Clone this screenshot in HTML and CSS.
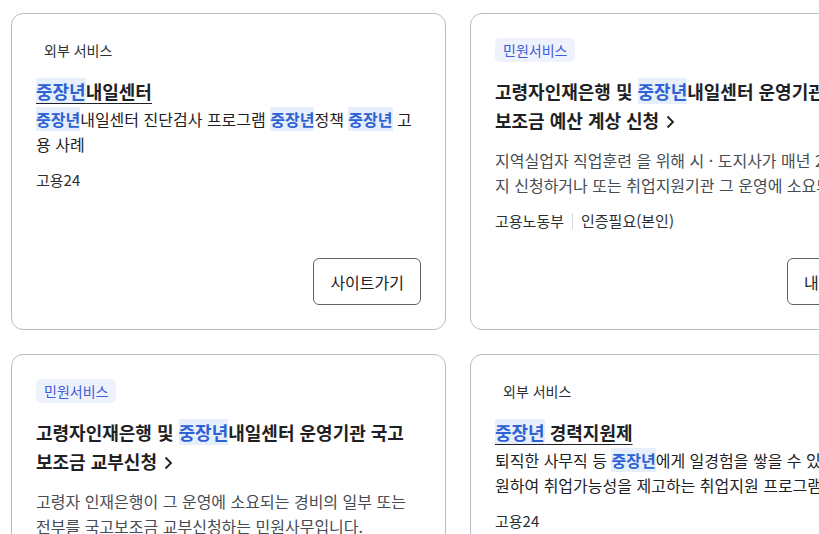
FILE: index.html
```html
<!DOCTYPE html>
<html lang="ko">
<head>
<meta charset="utf-8">
<title>검색 결과</title>
<link rel="stylesheet" href="styles.css">
</head>
<body>
<div class="grid">
  <article class="card">
    <span class="tag tag-ext">외부 서비스</span>
    <a class="title title-ext"><mark class="hl">중장년</mark>내일센터</a>
    <p class="desc desc-ext"><mark class="hl">중장년</mark>내일센터 진단검사 프로그램 <mark class="hl">중장년</mark>정책 <mark class="hl">중장년</mark> 고용 사례</p>
    <div class="meta meta-ext"><span>고용24</span></div>
    <button class="btn">사이트가기</button>
  </article>

  <article class="card">
    <span class="tag tag-civil">민원서비스</span>
    <a class="title">고령자인재은행 및 <mark class="hl hl-title">중장년</mark>내일센터 운영기관 국고 보조금 예산 계상 신청<svg class="chev" width="9" height="14" viewBox="0 0 9 14" aria-hidden="true"><path d="M1.5 1.5 L7 7 L1.5 12.5" fill="none" stroke="#1e2124" stroke-width="1.8"/></svg></a>
    <p class="desc">지역실업자 직업훈련 을 위해 시 · 도지사가 매년 2월 말까지 신청하거나 또는 취업지원기관 그 운영에 소요되는 경비</p>
    <div class="meta"><span>고용노동부</span><span class="sep"></span><span>인증필요(본인)</span></div>
    <button class="btn">내용보기</button>
  </article>

  <article class="card">
    <span class="tag tag-civil">민원서비스</span>
    <a class="title">고령자인재은행 및 <mark class="hl hl-title">중장년</mark>내일센터 운영기관 국고 보조금 교부신청<svg class="chev" width="9" height="14" viewBox="0 0 9 14" aria-hidden="true"><path d="M1.5 1.5 L7 7 L1.5 12.5" fill="none" stroke="#1e2124" stroke-width="1.8"/></svg></a>
    <p class="desc">고령자 인재은행이 그 운영에 소요되는 경비의 일부 또는 전부를 국고보조금 교부신청하는 민원사무입니다.</p>
    <div class="meta"><span>고용노동부</span><span class="sep"></span><span>인증필요(본인)</span></div>
    <button class="btn">내용보기</button>
  </article>

  <article class="card">
    <span class="tag tag-ext">외부 서비스</span>
    <a class="title title-ext"><mark class="hl">중장년</mark> 경력지원제</a>
    <p class="desc desc-ext">퇴직한 사무직 등 <mark class="hl">중장년</mark>에게 일경험을 쌓을 수 있도록 지원하여 취업가능성을 제고하는 취업지원 프로그램입니다.</p>
    <div class="meta meta-ext"><span>고용24</span></div>
    <button class="btn">사이트가기</button>
  </article>
</div>
</body>
</html>
```

FILE: styles.css
```css
html, body {
  margin: 0;
  padding: 0;
  overflow: hidden;
  background: #ffffff;
}

body {
  font-family: "Noto Sans CJK KR", "Noto Sans", sans-serif;
  color: #1e2124;
}

.grid {
  display: grid;
  grid-template-columns: 435px 435px;
  gap: 24px;
  padding: 13px 0 0 11px;
  width: max-content;
}

.card {
  box-sizing: border-box;
  min-height: 317px;
  border: 1px solid #b8bdc3;
  border-radius: 12px;
  padding: 24px;
  display: flex;
  flex-direction: column;
  align-items: flex-start;
  background: #fff;
}

.tag {
  display: inline-flex;
  align-items: center;
  height: 24px;
  padding: 0 8px;
  border-radius: 5px;
  font-size: 14px;
  line-height: 24px;
}

.tag-ext {
  color: #2b2f33;
}

.tag-civil {
  background: #edf2fd;
  color: #3d5bd6;
}

.title {
  margin-top: 15px;
  font-size: 18px;
  line-height: 28.8px;
  font-weight: 700;
  color: #1e2124;
  text-decoration: none;
}

.title-ext {
  text-decoration: underline;
  text-decoration-thickness: 1px;
  text-underline-offset: 4px;
}

.hl {
  background: #e8effc;
  color: #2c62d3;
  font-weight: 700;
}

.chev {
  margin-left: 7px;
  vertical-align: -1px;
}

.desc {
  margin: 13px 0 0;
  font-size: 16px;
  line-height: 25.6px;
  color: #464c53;
}

.desc-ext {
  margin-top: 1px;
  color: #1e2124;
}

.meta {
  margin-top: 11px;
  display: flex;
  align-items: center;
  font-size: 15px;
  line-height: 22.5px;
  color: #2b2f33;
}

.meta-ext {
  margin-top: 11px;
}

.sep {
  width: 1px;
  height: 16px;
  background: #d4d7db;
  margin: 0 8px;
}

.btn {
  margin-top: auto;
  align-self: flex-end;
  box-sizing: border-box;
  height: 47px;
  padding: 0 16px;
  border: 1px solid #5f646b;
  border-radius: 6px;
  background: #fff;
  font-family: inherit;
  font-size: 16px;
  color: #1e2124;
  cursor: pointer;
}
```
